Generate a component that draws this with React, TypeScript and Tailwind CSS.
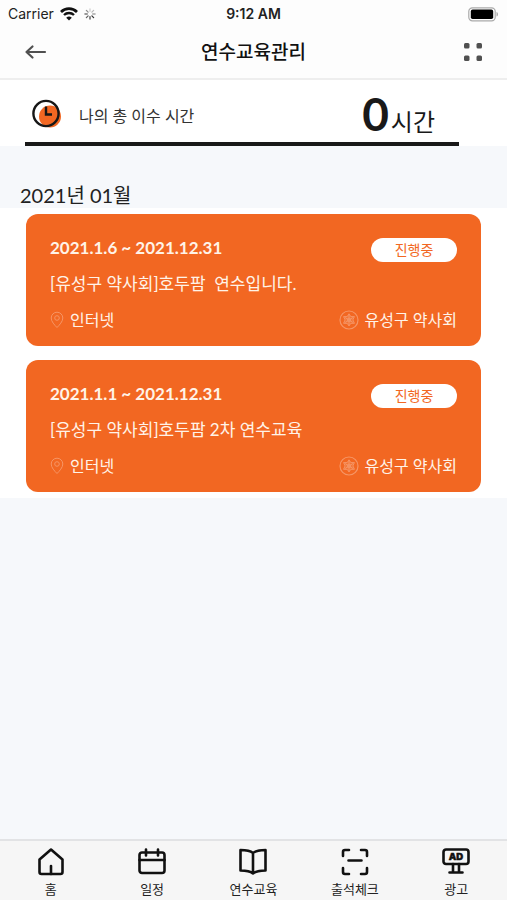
type Course = {
  id: number
  period: string
  title: string
  status: string
  place: string
  host: string
}

const courses: Course[] = [
  {
    id: 1,
    period: '2021.1.6 ~ 2021.12.31',
    title: '[유성구 약사회]호두팜  연수입니다.',
    status: '진행중',
    place: '인터넷',
    host: '유성구 약사회',
  },
  {
    id: 2,
    period: '2021.1.1 ~ 2021.12.31',
    title: '[유성구 약사회]호두팜 2차 연수교육',
    status: '진행중',
    place: '인터넷',
    host: '유성구 약사회',
  },
]

const spinnerOpacity = [0.2, 0.3, 0.4, 0.9, 0.8, 0.7, 0.6, 0.5]

const StatusBar = () => (
  <div className="grid h-7 grid-cols-3 items-center px-2 font-['Inter',sans-serif] text-sm text-[#222]">
    <div className="flex items-center gap-1.5">
      <span>Carrier</span>
      <svg width="18" height="14" viewBox="0 0 18 14" fill="none" stroke="#111" aria-hidden="true">
        <path d="M1 4.9a11.6 11.6 0 0 1 16 0" strokeWidth="2.8" />
        <path d="M4 8a7.3 7.3 0 0 1 10 0" strokeWidth="2.4" />
        <path d="M9 13.6 6.2 10.7a4.2 4.2 0 0 1 5.6 0z" fill="#111" stroke="none" />
      </svg>
      <svg width="12" height="12" viewBox="0 0 12 12" stroke="#222" strokeWidth="1.3" strokeLinecap="round" aria-hidden="true">
        {spinnerOpacity.map((opacity, i) => (
          <path key={i} d="M6 .9v2.4" opacity={opacity} transform={`rotate(${i * 45} 6 6)`} />
        ))}
      </svg>
    </div>
    <span className="text-center font-semibold">9:12 AM</span>
    <svg className="justify-self-end" width="31" height="15" viewBox="0 0 31 15" aria-hidden="true">
      <rect x="0.8" y="0.8" width="26.4" height="13" rx="3.6" fill="#fff" stroke="#aaa" strokeWidth="1.2" />
      <rect x="2.8" y="2.6" width="22.4" height="9.4" rx="1.8" fill="#000" />
      <path d="M28.5 5v4.6c2-.6 2-4 0-4.6z" fill="#aaa" />
    </svg>
  </div>
)

const Header = () => (
  <header className="grid grid-cols-[1fr_auto_1fr] items-center border-b-2 border-[#eee] px-6 pt-2 pb-2.5">
    <button type="button" aria-label="뒤로" className="h-8 w-6 justify-self-start">
      <svg width="24" height="16" viewBox="0 0 24 16" fill="none" stroke="#505050" strokeWidth="2.2" strokeLinecap="round" strokeLinejoin="round">
        <path d="M21 8H2.5M8.500 2.500 2.500 8l6 5.500" />
      </svg>
    </button>
    <h1 className="text-[19px] leading-8 font-medium text-[#111]">연수교육관리</h1>
    <button type="button" aria-label="메뉴" className="h-8 w-5 justify-self-end">
      <svg width="20" height="20" viewBox="0 0 20 20" fill="#505050">
        <rect x="1" y="1" width="5.500" height="5.500" rx="1.500" />
        <rect x="13.500" y="1" width="5.500" height="5.500" rx="1.500" />
        <rect x="1" y="13.500" width="5.500" height="5.500" rx="1.500" />
        <rect x="13.500" y="13.500" width="5.500" height="5.500" rx="1.500" />
      </svg>
    </button>
  </header>
)

const TotalTime = () => (
  <section className="bg-white pr-12 pl-[25px]">
    <div className="flex h-[66px] items-center border-b-4 border-[#191919] pt-1.5 pr-6 pl-[7px]">
      <svg width="30" height="30" viewBox="0 0 30 30" fill="none" aria-hidden="true">
        <circle cx="18" cy="17.500" r="11" fill="#f26722" />
        <circle cx="14" cy="14.500" r="12.600" stroke="#171717" strokeWidth="2.400" />
        <path d="M14 7.500v8h6" stroke="#171717" strokeWidth="2.400" />
      </svg>
      <span className="ml-[17px] pt-1 text-base text-[#333]">나의 총 이수 시간</span>
      <p className="ml-auto flex items-baseline gap-0.5 text-[#191919]">
        <strong className="text-[46px] leading-none font-bold">0</strong>
        <span className="text-2xl leading-none">시간</span>
      </p>
    </div>
  </section>
)

const PinIcon = () => (
  <svg width="14" height="18" viewBox="0 0 14 18" fill="none" stroke="#fff" opacity="0.3" aria-hidden="true">
    <path d="M7 16.500C4.500 14 1.200 10.500 1.200 7a5.800 5.800 0 0 1 11.600 0c0 3.500-3.300 7-5.800 9.500z" />
    <circle cx="7" cy="7" r="2.300" />
  </svg>
)

const HostIcon = () => (
  <svg width="20" height="20" viewBox="0 0 20 20" fill="none" stroke="#fff" opacity="0.3" aria-hidden="true">
    <circle cx="10" cy="10" r="9" strokeWidth="1.200" />
    <path d="m10 3.800 1.800 2.800h3.600l-1.500 3.300 1.500 3.400h-3.600L10 16l-1.800-2.700H4.600l1.500-3.400-1.500-3.300h3.600z" fill="#fff" fillOpacity="0.3" />
    <path d="M10 5v10M6 7.500l8 5M14 7.500l-8 5" />
    <circle cx="10" cy="10" r="1.800" />
  </svg>
)

const CourseCard = ({ course }: { course: Course }) => (
  <li className="rounded-xl bg-[#f26722] px-6 pt-5 pb-3 text-[#fff3e8]">
    <div className="flex items-center justify-between">
      <time className="text-[17px] leading-6 font-bold">{course.period}</time>
      <span className="mt-1 w-[86px] rounded-full bg-white text-center text-sm leading-6 text-[#f26722]">
        {course.status}
      </span>
    </div>
    <h3 className="mt-2 text-[17px] leading-7 whitespace-pre">{course.title}</h3>
    <div className="mt-2 flex items-center justify-between text-base leading-7">
      <span className="flex items-center gap-1.5">
        <PinIcon />
        {course.place}
      </span>
      <span className="flex items-center gap-1.5">
        <HostIcon />
        {course.host}
      </span>
    </div>
  </li>
)

const HomeIcon = () => (
  <>
    <path d="M2.500 11.500 14 1.500l11.500 10v12.500a2 2 0 0 1-2 2h-19a2 2 0 0 1-2-2z" />
    <path d="M14 18v8" />
  </>
)

const CalendarIcon = () => (
  <>
    <rect x="1.500" y="4.500" width="25" height="20.500" rx="2.500" />
    <path d="M1.500 12h25M8 1.500v6M20 1.500v6" />
  </>
)

const BookIcon = () => (
  <path d="M14 5v20.500M14 5C11 2.500 6.500 2 1.500 2v20.500c5 0 9.500.5 12.500 3 3-2.500 7.500-3 12.500-3V2C21.500 2 17 2.500 14 5z" />
)

const ScanIcon = () => (
  <path d="M2 8V4a2 2 0 0 1 2-2h4M20 2h4a2 2 0 0 1 2 2v4M26 20v4a2 2 0 0 1-2 2h-4M8 26H4a2 2 0 0 1-2-2v-4M7.500 12.500h13" />
)

const AdIcon = () => (
  <>
    <rect x="1.500" y="1.500" width="25" height="14.500" rx="2.500" />
    <path d="M11 16v8M17 16v8M7.500 24.500h13" />
    <text x="14" y="12.200" textAnchor="middle" fontFamily="Inter, sans-serif" fontSize="9.500" fontWeight="900" fill="#111" strokeWidth="0.5">
      AD
    </text>
  </>
)

const tabs = [
  { label: '홈', Icon: HomeIcon },
  { label: '일정', Icon: CalendarIcon },
  { label: '연수교육', Icon: BookIcon },
  { label: '출석체크', Icon: ScanIcon },
  { label: '광고', Icon: AdIcon },
]

const TabBar = () => (
  <nav className="grid grid-cols-5 border-t-2 border-[#e2e3e5] bg-[#f6f6f6] pt-[7px] pb-px">
    {tabs.map(({ label, Icon }) => (
      <a key={label} href="#" className="flex flex-col items-center gap-[3px] text-[13px] leading-5 text-[#222]">
        <svg width="28" height="28" viewBox="0 0 28 28" fill="none" stroke="#111" strokeWidth="2.600" strokeLinecap="round" strokeLinejoin="round" aria-hidden="true">
          <Icon />
        </svg>
        {label}
      </a>
    ))}
  </nav>
)

const App = () => (
  <div className="flex min-h-screen flex-col bg-[#f6f8fb] font-['Lato','Noto_Sans_CJK_KR',sans-serif]">
    <div className="bg-[#fdfdfd]">
      <StatusBar />
      <Header />
    </div>
    <main className="flex-1">
      <TotalTime />
      <h2 className="px-5 pt-9 text-xl leading-[26px] text-[#222]">2021년 01월</h2>
      <ul className="flex flex-col gap-3.5 bg-white px-[26px] py-1.5">
        {courses.map((course) => (
          <CourseCard key={course.id} course={course} />
        ))}
      </ul>
    </main>
    <TabBar />
  </div>
)

export default App
